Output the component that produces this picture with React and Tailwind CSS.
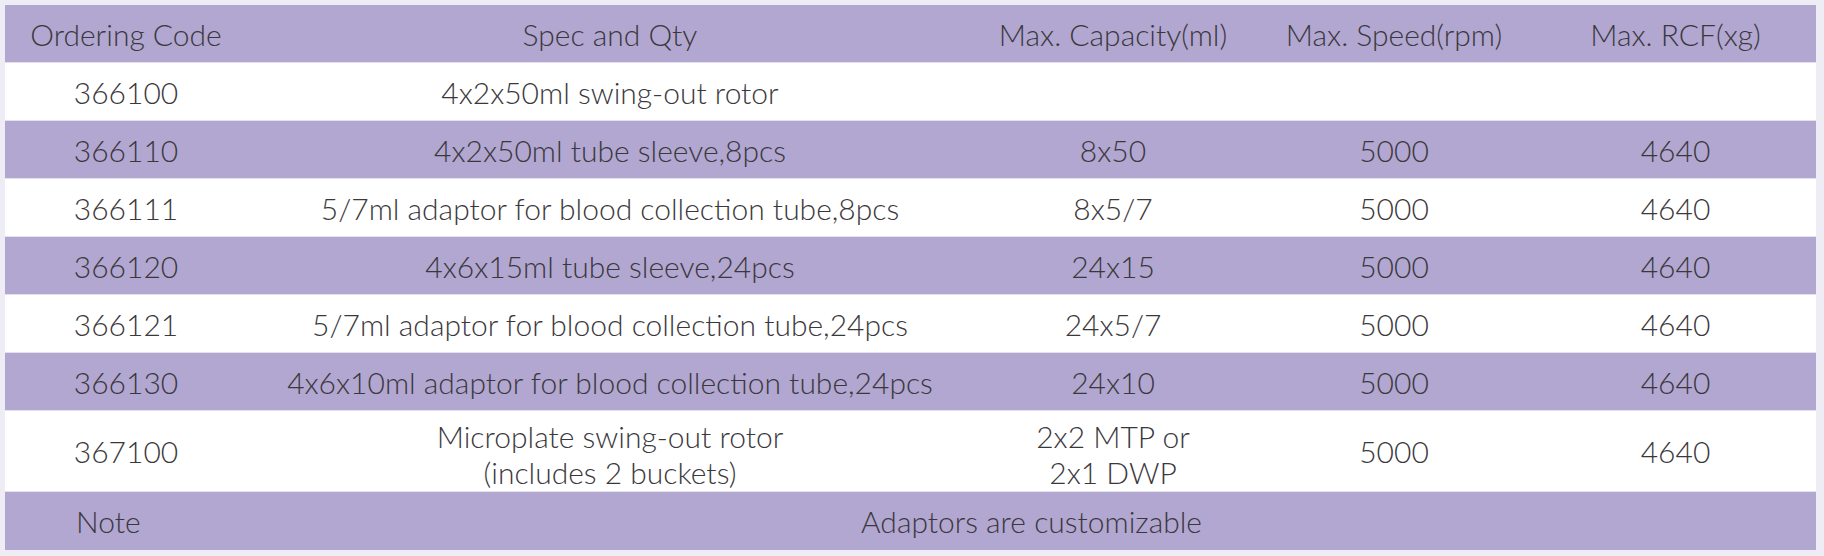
const rows = [
  { code: '366100', spec: '4x2x50ml swing-out rotor', cap: '', speed: '', rcf: '' },
  { code: '366110', spec: '4x2x50ml tube sleeve,8pcs', cap: '8x50', speed: '5000', rcf: '4640' },
  { code: '366111', spec: '5/7ml adaptor for blood collection tube,8pcs', cap: '8x5/7', speed: '5000', rcf: '4640' },
  { code: '366120', spec: '4x6x15ml tube sleeve,24pcs', cap: '24x15', speed: '5000', rcf: '4640' },
  { code: '366121', spec: '5/7ml adaptor for blood collection tube,24pcs', cap: '24x5/7', speed: '5000', rcf: '4640' },
  { code: '366130', spec: '4x6x10ml adaptor for blood collection tube,24pcs', cap: '24x10', speed: '5000', rcf: '4640' },
];

const purple = 'bg-[#b1a7d1]';

function Cell({ children, className = '' }) {
  return (
    <div className={`flex items-center justify-center text-center ${className}`}>
      {children}
    </div>
  );
}

export default function App() {
  return (
    <div
      className="w-[1824px] h-[556px] bg-[#eeedf5] pt-[5px] pl-[5px] pr-[8px] text-[#3b383c] text-[30px] font-light leading-[34px]"
      style={{ fontFamily: 'Lato, "Noto Sans", sans-serif' }}
    >
      <div className="grid grid-cols-[242px_726px_280px_282px_281px]">
        {/* header */}
        <div className={`col-span-5 grid grid-cols-subgrid h-[57px] ${purple}`}>
          <Cell>Ordering Code</Cell>
          <Cell>Spec and Qty</Cell>
          <Cell>Max. Capacity(ml)</Cell>
          <Cell>Max. Speed(rpm)</Cell>
          <Cell>Max. RCF(xg)</Cell>
        </div>

        {rows.map((r, i) => (
          <div
            key={r.code}
            className={`col-span-5 grid grid-cols-subgrid h-[58px] border-t border-[#e4e0ee] ${i % 2 === 1 ? purple : 'bg-white'}`}
          >
            <Cell>{r.code}</Cell>
            <Cell>{r.spec}</Cell>
            <Cell>{r.cap}</Cell>
            <Cell>{r.speed}</Cell>
            <Cell>{r.rcf}</Cell>
          </div>
        ))}

        <div className="col-span-5 grid grid-cols-subgrid h-[81px] border-t border-[#e4e0ee] bg-white">
          <Cell>367100</Cell>
          <Cell className="flex-col pt-[6px] leading-[36px]">
            <span>Microplate swing-out rotor</span>
            <span>(includes 2 buckets)</span>
          </Cell>
          <Cell className="flex-col pt-[6px] leading-[36px]">
            <span>2x2 MTP or</span>
            <span>2x1 DWP</span>
          </Cell>
          <Cell>5000</Cell>
          <Cell>4640</Cell>
        </div>

        <div className={`col-span-5 grid grid-cols-subgrid h-[59px] border-t border-[#e4e0ee] ${purple}`}>
          <div className="flex items-center pl-[71px]">Note</div>
          <Cell className="col-span-4">Adaptors are customizable</Cell>
        </div>
      </div>
    </div>
  );
}
